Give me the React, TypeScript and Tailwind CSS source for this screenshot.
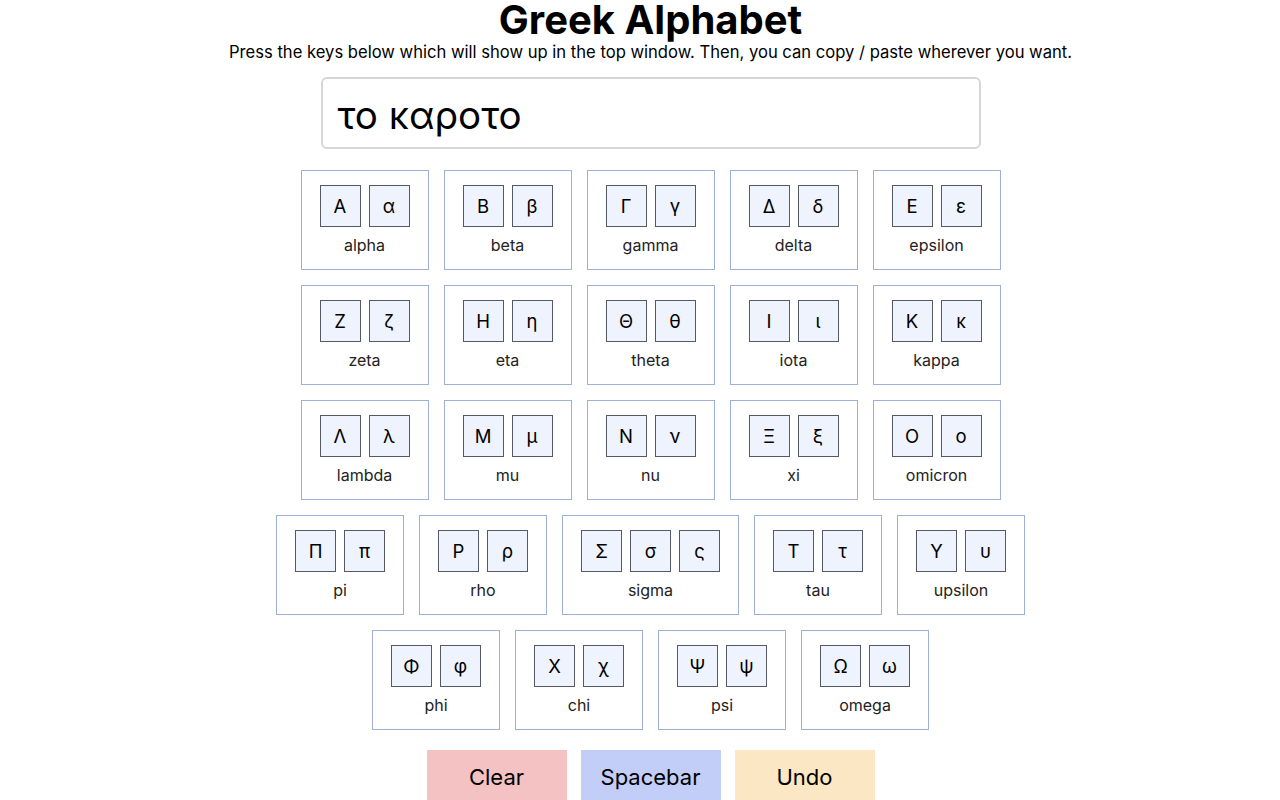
import React, { useState } from 'react';

type Letter = { name: string; chars: string[] };

const rows: Letter[][] = [
  [
    { name: 'alpha', chars: ['Α', 'α'] },
    { name: 'beta', chars: ['Β', 'β'] },
    { name: 'gamma', chars: ['Γ', 'γ'] },
    { name: 'delta', chars: ['Δ', 'δ'] },
    { name: 'epsilon', chars: ['Ε', 'ε'] },
  ],
  [
    { name: 'zeta', chars: ['Ζ', 'ζ'] },
    { name: 'eta', chars: ['Η', 'η'] },
    { name: 'theta', chars: ['Θ', 'θ'] },
    { name: 'iota', chars: ['Ι', 'ι'] },
    { name: 'kappa', chars: ['Κ', 'κ'] },
  ],
  [
    { name: 'lambda', chars: ['Λ', 'λ'] },
    { name: 'mu', chars: ['Μ', 'μ'] },
    { name: 'nu', chars: ['Ν', 'ν'] },
    { name: 'xi', chars: ['Ξ', 'ξ'] },
    { name: 'omicron', chars: ['Ο', 'ο'] },
  ],
  [
    { name: 'pi', chars: ['Π', 'π'] },
    { name: 'rho', chars: ['Ρ', 'ρ'] },
    { name: 'sigma', chars: ['Σ', 'σ', 'ς'] },
    { name: 'tau', chars: ['Τ', 'τ'] },
    { name: 'upsilon', chars: ['Υ', 'υ'] },
  ],
  [
    { name: 'phi', chars: ['Φ', 'φ'] },
    { name: 'chi', chars: ['Χ', 'χ'] },
    { name: 'psi', chars: ['Ψ', 'ψ'] },
    { name: 'omega', chars: ['Ω', 'ω'] },
  ],
];

const LetterCard: React.FC<{ letter: Letter; onPress: (c: string) => void }> = ({ letter, onPress }) => (
  <div className="h-[100px] px-[18px] pt-[14px] border border-[#9eafd8] flex flex-col items-center">
    <div className="flex gap-[8px]">
      {letter.chars.map((c) => (
        <button
          key={c}
          onClick={() => onPress(c)}
          className="w-[41px] h-[42px] border border-[#555a62] bg-[#eef3fd] flex items-center justify-center text-[18.5px] text-black leading-none"
        >
          {c}
        </button>
      ))}
    </div>
    <p className="mt-[6px] text-[16px] leading-[24px] text-[#222]">{letter.name}</p>
  </div>
);

export default function App() {
  const [text, setText] = useState('το καροτο');
  const [history, setHistory] = useState<string[]>([]);

  const type = (c: string) => {
    setHistory((h) => [...h, text]);
    setText(text + c);
  };

  const undo = () => {
    if (!history.length) return;
    setText(history[history.length - 1]);
    setHistory(history.slice(0, -1));
  };

  return (
    <div className="min-h-screen bg-white pl-[21px] flex flex-col items-center text-black font-['Inter','Noto_Sans',sans-serif]">
      <h1 className="text-[40px] leading-[40px] font-bold">Greek Alphabet</h1>
      <p className="text-[16.6px] leading-[24px]">
        Press the keys below which will show up in the top window. Then, you can copy / paste wherever you want.
      </p>
      <div className="mt-[13px] w-[660px] h-[72px] border-2 border-[#d6d6d6] rounded-[6px] px-[15px] flex items-center">
        <span className="text-[38.5px] leading-none pt-[4px]">{text}</span>
      </div>

      <div className="mt-[21px] flex flex-col gap-[15px]">
        {rows.map((row, i) => (
          <div key={i} className="flex justify-center gap-[15px]">
            {row.map((l) => (
              <LetterCard key={l.name} letter={l} onPress={type} />
            ))}
          </div>
        ))}
      </div>

      <div className="mt-[20px] flex gap-[14px]">
        <button onClick={() => { setHistory((h) => [...h, text]); setText(''); }} className="w-[140px] py-[15px] bg-[#f4c2c2] text-[22px] leading-[25px]">
          Clear
        </button>
        <button onClick={() => type(' ')} className="w-[140px] py-[15px] bg-[#c2cdf8] text-[22px] leading-[25px]">
          Spacebar
        </button>
        <button onClick={undo} className="w-[140px] py-[15px] bg-[#fbe7c3] text-[22px] leading-[25px]">
          Undo
        </button>
      </div>
    </div>
  );
}
